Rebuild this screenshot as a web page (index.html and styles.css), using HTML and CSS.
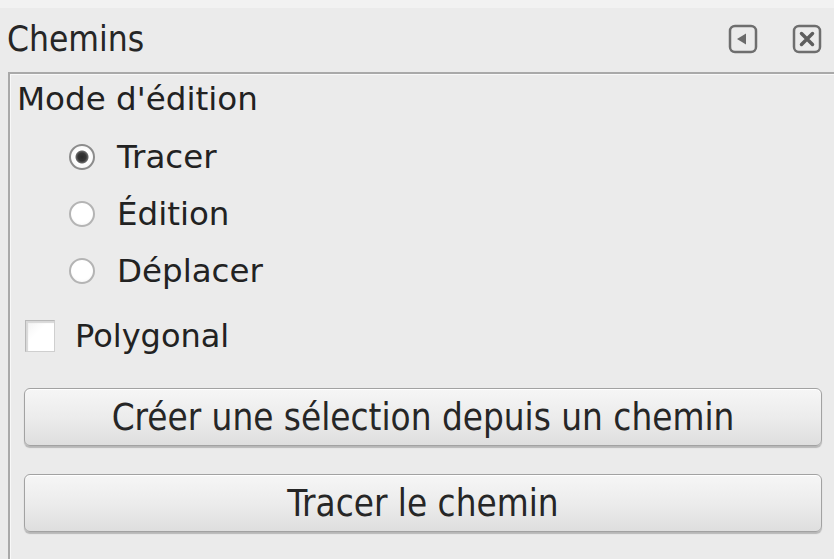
FILE: index.html
```html
<!DOCTYPE html>
<html lang="fr">
<head>
<meta charset="utf-8">
<title>Chemins</title>
<link rel="stylesheet" href="styles.css">
</head>
<body>
<div class="top-strip"></div>
<header class="title-bar">
  <span class="title">Chemins</span>
  <div class="title-icons">
    <span class="icon-btn" aria-label="Détacher">
      <svg width="30" height="30" viewBox="0 0 30 30">
        <rect x="2" y="2" width="26" height="26" rx="5" ry="5" fill="none" stroke="#6e6e6e" stroke-width="2.5"/>
        <polygon points="9,15 18,9.5 18,20.5" fill="#6a6a6a"/>
      </svg>
    </span>
    <span class="icon-btn" aria-label="Fermer">
      <svg width="30" height="30" viewBox="0 0 30 30">
        <rect x="2" y="2" width="26" height="26" rx="5" ry="5" fill="none" stroke="#6e6e6e" stroke-width="2.5"/>
        <path d="M9.5 9.5 L20.5 20.5 M20.5 9.5 L9.5 20.5" stroke="#5e5e5e" stroke-width="3.5" stroke-linecap="round"/>
      </svg>
    </span>
  </div>
</header>
<section class="frame">
  <div class="group-label">Mode d'édition</div>
  <div class="radio-list">
    <div class="radio-row"><span class="radio checked"></span><span class="label">Tracer</span></div>
    <div class="radio-row"><span class="radio"></span><span class="label">Édition</span></div>
    <div class="radio-row"><span class="radio"></span><span class="label">Déplacer</span></div>
  </div>
  <div class="check-row"><span class="checkbox"></span><span class="label check-label">Polygonal</span></div>
  <div class="buttons">
    <button class="btn" type="button">Créer une sélection depuis un chemin</button>
    <button class="btn" type="button">Tracer le chemin</button>
  </div>
</section>
</body>
</html>
```
FILE: styles.css
```css
html, body {
  margin: 0;
  padding: 0;
}
body {
  width: 834px;
  height: 559px;
  overflow: hidden;
  background: #ebebeb;
  color: #222222;
  font-family: "DejaVu Sans", sans-serif;
}
.top-strip {
  height: 8px;
  background: #f2f2f2;
}
.title-bar {
  height: 64px;
  display: flex;
  align-items: center;
  justify-content: space-between;
  padding: 0 12px 0 7px;
}
.title {
  font-family: "DejaVu Sans Condensed", "DejaVu Sans", sans-serif;
  font-size: 35px;
  color: #262626;
  margin-top: -3px;
}
.title-icons {
  display: flex;
  gap: 34px;
  margin-top: -3px;
}
.icon-btn {
  display: block;
  width: 30px;
  height: 30px;
}
.icon-btn svg {
  display: block;
}
.frame {
  box-sizing: border-box;
  border-top: 2px solid #a9a9a9;
  border-left: 2px solid #a9a9a9;
  margin-left: 8px;
  height: 487px;
  padding: 7px 12px 0 0;
  box-shadow: inset 1px 1px 0 #f8f8f8;
}
.group-label {
  font-size: 32.6px;
  padding-left: 7px;
  line-height: 37px;
}
.radio-list {
  margin-top: 10px;
  display: flex;
  flex-direction: column;
}
.radio-row {
  height: 57px;
  display: flex;
  align-items: center;
  padding-left: 59px;
  gap: 22px;
}
.label {
  font-size: 32.5px;
}
.check-label {
  font-size: 32px;
}
.radio {
  width: 22px;
  height: 22px;
  border-radius: 50%;
  border: 2px solid #b4b4b4;
  background: radial-gradient(circle at 50% 40%, #ffffff 60%, #f0f0f0 100%);
  flex: none;
}
.radio.checked {
  border-color: #8c8c8c;
  background: radial-gradient(circle at 50% 50%, #2a2a2a 0, #363636 4px, #6a6a6a 6px, #ffffff 7px, #f2f2f2 100%);
}
.check-row {
  height: 56px;
  margin-top: 9px;
  display: flex;
  align-items: center;
  padding-left: 15px;
  gap: 20px;
}
.checkbox {
  width: 28px;
  height: 30px;
  flex: none;
  border: 1px solid #cfcfcf;
  border-top-color: #b8b8b8;
  border-left-color: #b8b8b8;
  background: linear-gradient(135deg, #f2f2f2 0, #ffffff 40%, #ffffff 100%);
  box-shadow: inset 2px 2px 1px #d8d8d8;
}
.buttons {
  margin-top: 24px;
  padding-left: 14px;
  display: flex;
  flex-direction: column;
  gap: 28px;
}
.btn {
  height: 58px;
  width: 798px;
  border: 1px solid #a2a2a2;
  border-radius: 6px;
  background: linear-gradient(to bottom, #f6f6f6 0%, #ececec 50%, #dedede 100%);
  box-shadow: 0 2px 1px rgba(0, 0, 0, 0.22), inset 0 1px 0 #ffffff;
  font-family: "DejaVu Sans Condensed", "DejaVu Sans", sans-serif;
  font-size: 36.5px;
  color: #262626;
  padding: 0;
  margin: 0;
}
```
